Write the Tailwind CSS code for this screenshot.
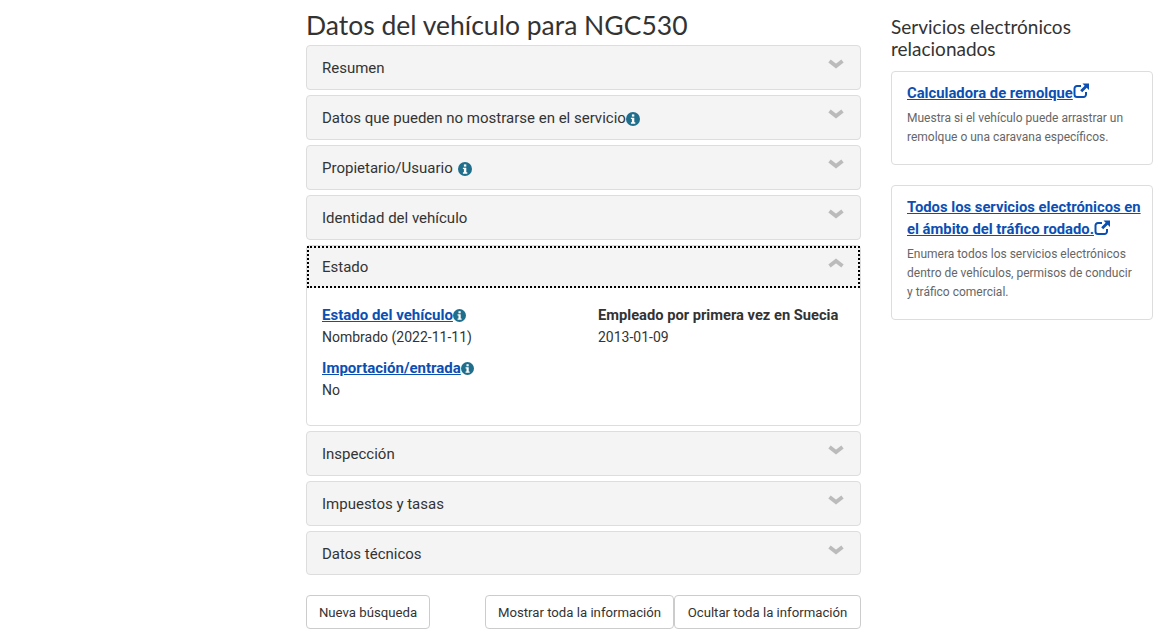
<!DOCTYPE html>
<html lang="es">
<head>
    <meta charset="UTF-8">
    <title>Datos del vehículo</title>
    <script src="https://cdn.jsdelivr.net/npm/@tailwindcss/browser@4"></script>
</head>
<body class="bg-white h-[633px] overflow-hidden font-['Roboto',sans-serif] text-[#333]">
<svg class="hidden">
    <symbol id="info" viewBox="0 0 14 14"><circle cx="7" cy="7" r="7" fill="#1f6e8c"/><rect x="5.9" y="2.4" width="2.4" height="2.2" fill="#fff"/><path d="M4.9 5.7h3.4v4.6h1v1.4H4.9v-1.4h1V7.1h-1z" fill="#fff"/></symbol>
    <symbol id="down" viewBox="0 0 16 10"><path d="M1.500 2l6.500 5 6.500-5" fill="none" stroke="#bbb" stroke-width="3.800"/></symbol>
    <symbol id="up" viewBox="0 0 16 10"><path d="M1.500 8l6.500-5 6.500 5" fill="none" stroke="#bbb" stroke-width="3.800"/></symbol>
    <symbol id="ext" viewBox="0 0 16 16"><path d="M8 3H4a2.500 2.500 0 0 0-2.500 2.500v6A2.500 2.500 0 0 0 4 14h6.500a2.500 2.500 0 0 0 2.500-2.500V9" fill="none" stroke="#0b4fb3" stroke-width="2"/><path d="M9.500 0.500H16V7l-2.300-2.300-4.500 4.600-2-2 4.500-4.500z" fill="#0b4fb3"/></symbol>
</svg>

<div class="flex pl-[306px]">
    <!-- Main column -->
    <main class="w-[555px]">
        <h1 class="font-['Lato',sans-serif] text-[26.500px] leading-[29px] pt-[11px] pb-[5px] text-[#333]">Datos del vehículo para NGC530</h1>

        <div class="flex flex-col gap-[5px]">
            <div class="h-[45px] pt-[2px] bg-[#f4f4f4] border border-[#ddd] rounded flex justify-between pl-[15px] pr-4 items-center text-[15px]">
                <span>Resumen</span>
                <svg class="w-4 h-[10px] mb-[9px]"><use href="#down"/></svg>
            </div>
            <div class="h-[45px] pt-[2px] bg-[#f4f4f4] border border-[#ddd] rounded flex justify-between pl-[15px] pr-4 items-center text-[15px]">
                <span class="flex items-center">Datos que pueden no mostrarse en el servicio<svg class="w-[14px] h-[14px]"><use href="#info"/></svg></span>
                <svg class="w-4 h-[10px] mb-[9px]"><use href="#down"/></svg>
            </div>
            <div class="h-[45px] pt-[2px] bg-[#f4f4f4] border border-[#ddd] rounded flex justify-between pl-[15px] pr-4 items-center text-[15px]">
                <span class="flex items-center gap-[5px]">Propietario/Usuario<svg class="w-[14px] h-[14px]"><use href="#info"/></svg></span>
                <svg class="w-4 h-[10px] mb-[9px]"><use href="#down"/></svg>
            </div>
            <div class="h-[45px] pt-[2px] bg-[#f4f4f4] border border-[#ddd] rounded flex justify-between pl-[15px] pr-4 items-center text-[15px]">
                <span>Identidad del vehículo</span>
                <svg class="w-4 h-[10px] mb-[9px]"><use href="#down"/></svg>
            </div>

            <!-- Open panel -->
            <div class="h-[181px] border border-[#ddd] rounded">
                <div class="h-[42px] bg-[#f4f4f4] border-2 border-dotted border-black flex justify-between pl-[13px] pr-[14px] items-center text-[15px]">
                    <span>Estado</span>
                    <svg class="w-4 h-[10px] mb-[9px]"><use href="#up"/></svg>
                </div>
                <div class="grid grid-cols-[276px_1fr] pl-[15px] pt-[16px] text-[14px] leading-[22px]">
                    <div>
                        <div class="flex items-center font-bold text-[15px] text-[#0b4fb3]"><span class="underline">Estado del vehículo</span><svg class="w-[13px] h-[13px]"><use href="#info"/></svg></div>
                        <div>Nombrado (2022-11-11)</div>
                        <div class="flex items-center font-bold text-[15px] text-[#0b4fb3] mt-[9px]"><span class="underline">Importación/entrada</span><svg class="w-[13px] h-[13px]"><use href="#info"/></svg></div>
                        <div>No</div>
                    </div>
                    <div>
                        <div class="font-bold text-[14.700px]">Empleado por primera vez en Suecia</div>
                        <div>2013-01-09</div>
                    </div>
                </div>
            </div>

            <div class="h-[45px] pt-[2px] bg-[#f4f4f4] border border-[#ddd] rounded flex justify-between pl-[15px] pr-4 items-center text-[15px]">
                <span>Inspección</span>
                <svg class="w-4 h-[10px] mb-[9px]"><use href="#down"/></svg>
            </div>
            <div class="h-[45px] pt-[2px] bg-[#f4f4f4] border border-[#ddd] rounded flex justify-between pl-[15px] pr-4 items-center text-[15px]">
                <span>Impuestos y tasas</span>
                <svg class="w-4 h-[10px] mb-[9px]"><use href="#down"/></svg>
            </div>
            <div class="h-[44px] pt-[2px] bg-[#f4f4f4] border border-[#ddd] rounded flex justify-between pl-[15px] pr-4 items-center text-[15px]">
                <span>Datos técnicos</span>
                <svg class="w-4 h-[10px] mb-[9px]"><use href="#down"/></svg>
            </div>
        </div>

        <div class="flex justify-between mt-[20px] text-[13.200px]">
            <button class="h-[34px] w-[124px] pt-[2px] border border-[#ccc] rounded">Nueva búsqueda</button>
            <div class="flex">
                <button class="h-[34px] w-[189px] pt-[2px] border border-[#ccc] rounded">Mostrar toda la información</button>
                <button class="h-[34px] w-[187px] pt-[2px] border border-[#ccc] rounded">Ocultar toda la información</button>
            </div>
        </div>
    </main>

    <!-- Sidebar -->
    <aside class="w-[262px] ml-[30px] pt-[16px]">
        <h2 class="font-['Lato',sans-serif] text-[19px] leading-[22px] mb-[11px]">Servicios electrónicos relacionados</h2>
        <div class="h-[94px] border border-[#ddd] rounded pl-[15px] pr-2 pt-[10px]">
            <div class="flex items-center font-bold text-[14.800px] leading-[22px] text-[#0b4fb3]"><span class="underline">Calculadora de remolque</span><svg class="w-4 h-4 mb-1"><use href="#ext"/></svg></div>
            <p class="text-[12px] leading-[19px] text-[#666] mt-[5px]">Muestra si el vehículo puede arrastrar un remolque o una caravana específicos.</p>
        </div>
        <div class="h-[135px] border border-[#ddd] rounded pl-[15px] pr-2 pt-[10px] mt-[20px]">
            <div class="font-bold text-[14.800px] leading-[22px] text-[#0b4fb3]"><span class="underline">Todos los servicios electrónicos en el ámbito del tráfico rodado.</span><svg class="inline w-4 h-4 mb-1"><use href="#ext"/></svg></div>
            <p class="text-[12px] leading-[19px] text-[#666] mt-[5px] whitespace-nowrap">Enumera todos los servicios electrónicos<br>dentro de vehículos, permisos de conducir<br>y tráfico comercial.</p>
        </div>
    </aside>
</div>
</body>
</html>
